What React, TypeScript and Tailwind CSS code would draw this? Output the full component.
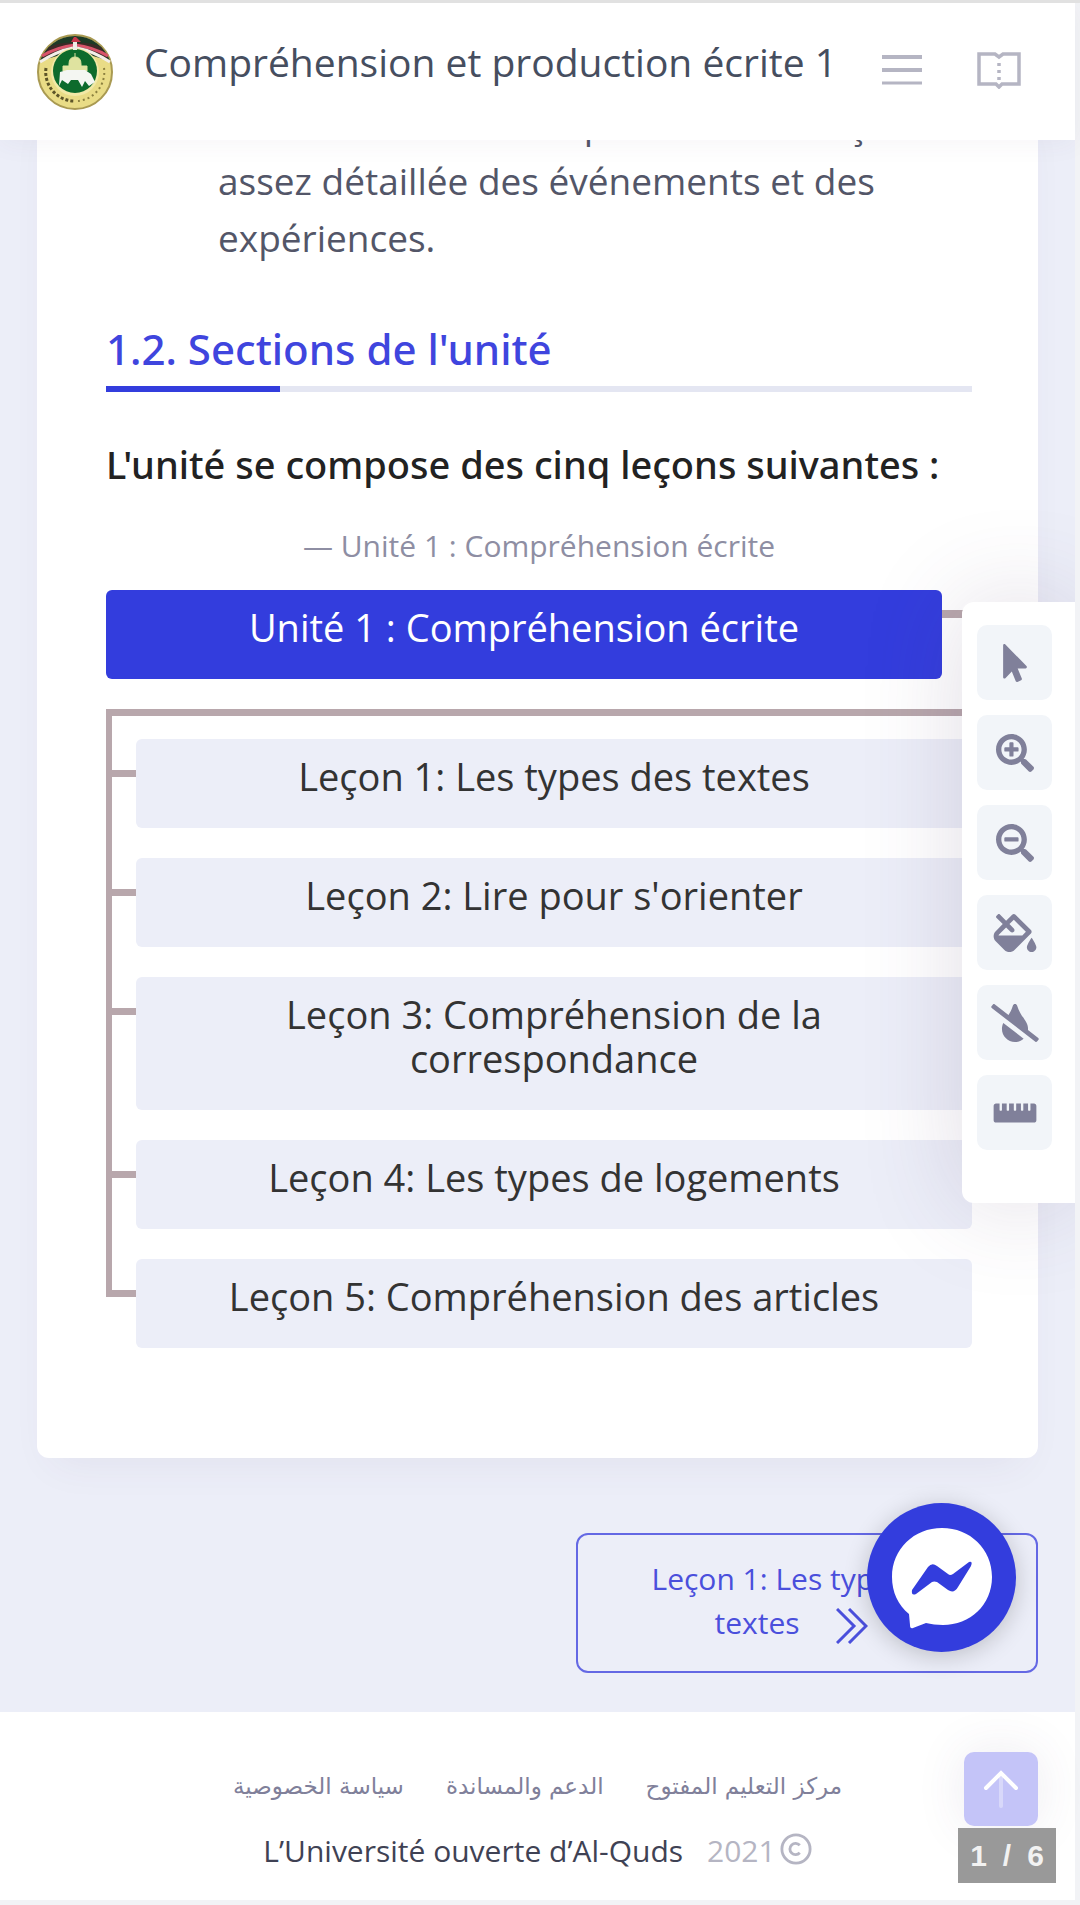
import {
  FaFillDrip,
  FaMousePointer,
  FaRulerHorizontal,
  FaSearchMinus,
  FaSearchPlus,
  FaTintSlash,
} from "react-icons/fa";

const lessons = [
  "Leçon 1: Les types des textes",
  "Leçon 2: Lire pour s'orienter",
  "Leçon 3: Compréhension de la correspondance",
  "Leçon 4: Les types de logements",
  "Leçon 5: Compréhension des articles",
];

const tools = [
  { label: "Curseur", Icon: FaMousePointer },
  { label: "Agrandir", Icon: FaSearchPlus },
  { label: "Réduire", Icon: FaSearchMinus },
  { label: "Couleur de fond", Icon: FaFillDrip },
  { label: "Sans couleur", Icon: FaTintSlash },
  { label: "Règle", Icon: FaRulerHorizontal },
];

const footerLinks = ["مركز التعليم المفتوح", "الدعم والمساندة", "سياسة الخصوصية"];

function Logo() {
  return (
    <svg viewBox="0 0 76 76" className="size-[76px] shrink-0" aria-hidden="true">
      <circle cx="38" cy="38" r="37" fill="#e9dc86" stroke="#a99a52" strokeWidth="2" />
      <path d="M3 27A37 37 0 0 1 73 27L56 22H20Z" fill="#1d3a26" />
      <path d="M12 13Q24 8 37 9L20 20L5 24Z" fill="#3b2a26" />
      <path d="M64 13Q52 8 39 9L56 20L71 24Z" fill="#3b2a26" />
      <path d="M37 3L39 3L44 8L34 8Z" fill="#c8384a" />
      <path d="M38 11Q20 13 5 22" fill="none" stroke="#d8546a" strokeWidth="3" />
      <path d="M38 11Q56 13 71 22" fill="none" stroke="#d8546a" strokeWidth="3" />
      <path d="M36 14Q20 17 3 28" fill="none" stroke="#f3efe8" strokeWidth="3" />
      <path d="M40 14Q56 17 73 28" fill="none" stroke="#f3efe8" strokeWidth="3" />
      <path d="M9 34A29 29 0 0 0 37 67" fill="none" stroke="#5d5528" strokeWidth="3" strokeDasharray="3 2" />
      <path d="M67 34A29 29 0 0 1 41 67" fill="none" stroke="#8b803f" strokeWidth="2" strokeDasharray="2 3" />
      <circle cx="38" cy="38" r="24" fill="#f2e9a6" />
      <circle cx="38" cy="37" r="22" fill="#0d6b2c" />
      <rect x="36" y="8" width="4" height="8" fill="#efefe6" />
      <path d="M38 19V23M32 30Q32 23 38 23Q44 23 44 30V32H50V37H26V32H32Z" fill="#dfe3a0" stroke="#dfe3a0" />
      <path d="M23 38L30 36H48L54 40L58 48L52 52L48 47L45 53L41 46L34 46L31 50L25 46L22 52Z" fill="#f4f6f2" />
    </svg>
  );
}

function Header() {
  return (
    <header className="relative z-10 flex h-[137px] items-center bg-white pr-[54px] pl-[37px] shadow-[0_4px_24px_rgba(82,63,105,0.05)]">
      <Logo />
      <h1 className="ml-[31px] pb-5 text-[39px] leading-[52px] text-[#464e5f]">
        Compréhension et production écrite 1
      </h1>
      <div className="ml-auto flex items-center gap-[54px] pb-1">
        <button type="button" aria-label="Menu">
          <svg viewBox="0 0 42 32" className="h-8 w-[42px]" stroke="#b5b5c3" strokeWidth="4">
            <path d="M1 3H41M1 16H41" />
            <path d="M1 29H41" strokeWidth="3" />
          </svg>
        </button>
        <button type="button" aria-label="Sommaire">
          <svg viewBox="0 0 44 38" className="h-[38px] w-11" fill="none" stroke="#b5b5c3" strokeWidth="3.5">
            <path d="M2 3H18L22 6L26 3H42V33H25L22 36L19 33H2Z" />
            <path d="M22 12V31" strokeDasharray="3 4" />
          </svg>
        </button>
      </div>
    </header>
  );
}

function UnitTree() {
  return (
    <figure>
      <figcaption className="text-center text-[30px] leading-9 text-[#8e8ea3]">
        — Unité 1 : Compréhension écrite
      </figcaption>
      <div className="mt-[26px] flex">
        <div className="grow rounded-md bg-[#333ddd] pt-[15px] pb-[30px] text-center text-[38px] leading-[44px] text-white">
          Unité 1 : Compréhension écrite
        </div>
        <div className="-mb-8 mt-5 w-[30px] border-t-8 border-r-[7px] border-[#b8a7ac]" />
      </div>
      <div className="mt-[30px] h-[7px] bg-[#b8a7ac]" />
      <ul className="pt-[23px]">
        {lessons.map((lesson) => (
          <li key={lesson} className="group relative pb-[30px] pl-[30px] last:pb-0">
            <span className="absolute -top-[23px] bottom-0 left-0 w-[6px] bg-[#b8a7ac] group-last:bottom-auto group-last:h-[61px]" />
            <span className="absolute top-[31px] left-0 h-[7px] w-[30px] bg-[#b8a7ac]" />
            <a
              href="#lecon"
              className="block rounded-md bg-[#eceef8] px-20 pt-[15px] pb-[30px] text-center text-[38px] leading-[44px] text-[#333333]"
            >
              {lesson}
            </a>
          </li>
        ))}
      </ul>
    </figure>
  );
}

function Toolbar() {
  return (
    <div className="absolute top-[599px] right-[5px] z-20 flex flex-col gap-[15px] rounded-l-xl bg-white pt-[23px] pr-[23px] pb-[53px] pl-[15px] shadow-[0_0_100px_rgba(82,63,105,0.18)] [clip-path:inset(-140px_0_-140px_-140px)]">
      {tools.map(({ label, Icon }) => (
        <button
          key={label}
          type="button"
          aria-label={label}
          className="flex size-[75px] items-center justify-center rounded-[10px] bg-[#f2f5f9] text-[#80809a]"
        >
          <Icon className="h-[38px] w-12" />
        </button>
      ))}
    </div>
  );
}

function Footer() {
  return (
    <footer className="bg-white pt-[54px] pb-[22px] text-center">
      <nav dir="rtl" className="flex justify-center gap-[42px] text-[23px] leading-10 text-[#80809a]">
        {footerLinks.map((link) => (
          <a key={link} href="#lien" className="font-['DejaVu_Sans',sans-serif]">
            {link}
          </a>
        ))}
      </nav>
      <p className="mt-[18px] flex items-center justify-center text-[30px] leading-[54px]">
        <a href="#universite" className="text-[#3f4254]">
          L’Université ouverte d’Al-Quds
        </a>
        <span className="ml-6 text-[#b5b5c3]">2021</span>
        <svg viewBox="0 0 34 34" className="mb-1 ml-1 size-8" fill="none" stroke="#b5b5c3" strokeWidth="3">
          <circle cx="17" cy="17" r="15" />
          <path d="M21 13A6 6 0 1 0 21 21" />
        </svg>
      </p>
    </footer>
  );
}

export default function App() {
  return (
    <div className="relative min-h-screen overflow-hidden border-t-[3px] border-[#e1e1e1] bg-[#f2f3f6] pr-[5px] pb-[5px] font-['Open_Sans','Noto_Sans',sans-serif]">
      <Header />
      <main className="bg-[#eceef8] pr-[37px] pb-[39px] pl-[37px]">
        <article className="rounded-b-xl bg-white pr-[66px] pb-[110px] pl-[69px] shadow-[0_20px_40px_-16px_rgba(82,63,105,0.07)]">
          <p className="-mt-[45px] ml-[112px] text-[37px] leading-[57px] text-[#535668]">
            Être là en mesure de présenter de façon assez détaillée des événements et des expériences.
          </p>
          <h2 className="mt-14 pb-[10px] font-['Noto_Sans',sans-serif] text-[42px] leading-[54px] font-medium text-[#3f45de]">
            1.2. Sections de l'unité
          </h2>
          <div className="h-[6px] bg-[#e4e6f2]">
            <div className="h-full w-[174px] bg-[#333ddd]" />
          </div>
          <h3 className="mt-[46px] mb-[38px] font-['Noto_Sans',sans-serif] text-[38px] leading-[52px] font-medium text-[#222222]">
            L'unité se compose des cinq leçons suivantes :
          </h3>
          <UnitTree />
        </article>
        <div className="mt-[75px] flex justify-end">
          <a
            href="#suivant"
            className="w-[462px] rounded-xl border-2 border-[#6468e4] px-[70px] pt-[22px] pb-[26px] text-center text-[30px] leading-[44px] text-[#4a4fdc]"
          >
            Leçon 1: Les types des textes
            <svg viewBox="0 0 32 36" className="mr-8 ml-9 inline h-9 w-8" fill="none" stroke="currentColor" strokeWidth="3">
              <path d="M1 1L18 18L1 35M13 1L30 18L13 35" />
            </svg>
          </a>
        </div>
      </main>
      <Footer />

      <Toolbar />
      <button
        type="button"
        aria-label="Messenger"
        className="absolute right-[64px] bottom-[253px] flex size-[149px] items-center justify-center rounded-full bg-[#333ddd] shadow-[0_4px_24px_rgba(0,0,0,0.2)]"
      >
        <svg viewBox="0 0 102 102" className="size-[102px]">
          <path
            d="M51 1C79 1 101 22 101 50C101 78 79 98 52 98C46 98 40 97 35 96L22 101Q19 102 19 98L18 87C7 78 1 65 1 50C1 22 23 1 51 1Z"
            fill="#fff"
          />
          <path
            d="M21 63L37 40Q41 35 46 39L57 47Q59 49 62 47L78 35Q82 34 80 39L67 60Q63 67 57 63L46 55Q43 54 41 55L25 67Q20 69 21 63Z"
            fill="#333ddd"
          />
        </svg>
      </button>
      <button
        type="button"
        aria-label="Haut de page"
        className="absolute right-[42px] bottom-[79px] flex size-[74px] items-center justify-center rounded-[10px] bg-[#c4c4f8] shadow-[0_0_50px_rgba(82,63,105,0.1)]"
      >
        <svg viewBox="0 0 36 38" className="h-[38px] w-9" fill="none" stroke="#fff" strokeWidth="4" strokeLinecap="round">
          <path d="M18 6V36" strokeOpacity="0.35" />
          <path d="M3 18L18 3L33 18" />
        </svg>
      </button>
      <div className="absolute right-6 bottom-[22px] flex h-[55px] w-[98px] items-center justify-center gap-4 bg-[#999999] font-['Liberation_Sans',sans-serif] text-[30px] font-bold text-[#f2f2f2]">
        <span>1</span>
        <span>/</span>
        <span>6</span>
      </div>
    </div>
  );
}
